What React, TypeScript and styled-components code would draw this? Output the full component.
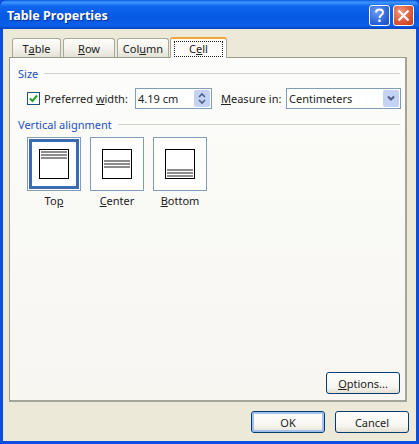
import React from "react"
import styled, { createGlobalStyle } from "styled-components"

const Global = createGlobalStyle`
  html, body { margin: 0; padding: 0; background: #0a4fd8; }
  * { box-sizing: border-box; }
`

const Window = styled.div`
  width: 419px;
  height: 444px;
  display: flex;
  flex-direction: column;
  font-family: "Noto Sans", "DejaVu Sans", sans-serif;
  font-size: 11px;
  color: #222;
  background: #0a4ee0;
  border-radius: 7px 7px 0 0;
  overflow: hidden;
`

const TitleBar = styled.div`
  height: 29px;
  flex: none;
  display: flex;
  align-items: center;
  justify-content: space-between;
  padding: 1px 5px 0 7px;
  background: linear-gradient(180deg, #0a5be6 0%, #3f95fb 8%, #0f66ee 22%, #0558e2 60%, #0a60ec 88%, #0443c0 100%);
`

const Title = styled.span`
  font-family: "Noto Sans", "DejaVu Sans", sans-serif;
  font-weight: 700;
  font-size: 12.5px;
  color: #fff;
  text-shadow: 1px 1px 1px #0a2f96;
`

const TitleButtons = styled.div`
  display: flex;
  gap: 3px;
`

const CaptionButton = styled.div<{ $close?: boolean }>`
  width: 21px;
  height: 21px;
  border: 1px solid #fff;
  border-radius: 3px;
  display: flex;
  align-items: center;
  justify-content: center;
  background: ${(p) =>
    p.$close
      ? "radial-gradient(circle at 35% 30%, #ee9a80 0%, #dd5a3a 55%, #c33a16 100%)"
      : "radial-gradient(circle at 35% 30%, #6d9cf4 0%, #2e66dd 60%, #1c48bf 100%)"};
`

const Client = styled.div`
  flex: 1;
  margin: 0 3px 3px;
  padding: 7px 6px 0 6px;
  display: flex;
  flex-direction: column;
  background: #ece9d8;
`

const TabRow = styled.div`
  display: flex;
  align-items: flex-end;
  gap: 2px;
  padding-left: 3px;
  height: 21px;
  flex: none;
`

const Tab = styled.div<{ $active?: boolean; $w: number }>`
  width: ${(p) => p.$w}px;
  height: ${(p) => (p.$active ? 21 : 19)}px;
  display: flex;
  align-items: center;
  justify-content: center;
  border: 1px solid #a9a89c;
  border-bottom: none;
  border-radius: 3px 3px 0 0;
  position: relative;
  z-index: ${(p) => (p.$active ? 1 : 0)};
  margin-bottom: ${(p) => (p.$active ? -1 : 0)}px;
  margin-left: ${(p) => (p.$active ? -1 : 0)}px;
  background: ${(p) =>
    p.$active ? "#fcfcfa" : "linear-gradient(180deg, #fefefb 0%, #f4f3ec 50%, #e4e2d6 100%)"};
  border-top: ${(p) => (p.$active ? "2px solid #f2a53a" : "1px solid #a9a89c")};
`

const FocusLabel = styled.span`
  border: 1px dotted #222;
  padding: 0 14px;
  line-height: 14px;
`

const Key = styled.span`
  text-decoration: underline;
`

const Panel = styled.div`
  width: 398px;
  height: 345px;
  flex: none;
  padding: 7px 5px 6px 8px;
  display: flex;
  flex-direction: column;
  border: 1px solid #9a9a8e;
  border-right: 2px solid #a5a498;
  border-bottom: 2px solid #a5a498;
  background: linear-gradient(180deg, #fcfcfa 0%, #f7f6f1 100%);
`

const Legend = styled.div`
  display: flex;
  align-items: center;
  gap: 6px;
  height: 16px;
  color: #2250c0;
  &::after {
    content: "";
    flex: 1;
    height: 1px;
    background: #d4d2c8;
  }
`

const SizeRow = styled.div`
  display: flex;
  align-items: center;
  height: 21px;
  margin: 7px 0 0 9px;
`

const Check = styled.div`
  width: 13px;
  height: 13px;
  flex: none;
  border: 1px solid #1c5180;
  background: #fff;
  display: flex;
  align-items: center;
  justify-content: center;
  margin-right: 4px;
`

const RowLabel = styled.span<{ $w: number; $inset?: number }>`
  width: ${(p) => p.$w}px;
  padding-left: ${(p) => p.$inset ?? 0}px;
  flex: none;
  white-space: nowrap;
`

const Field = styled.div<{ $w: number }>`
  width: ${(p) => p.$w}px;
  height: 21px;
  flex: none;
  display: flex;
  align-items: center;
  justify-content: space-between;
  padding: 1px 1px 1px 2px;
  border: 1px solid #7f9db9;
  background: #fff;
`

const Spin = styled.div`
  width: 16px;
  height: 17px;
  display: flex;
  align-items: center;
  justify-content: center;
  border-radius: 2px;
  background: #c3d2f5;
`

const AlignSection = styled.div`
  margin-top: 7px;
`

const AlignRow = styled.div`
  display: flex;
  gap: 9px;
  margin: 5px 0 0 9px;
`

const AlignItem = styled.div`
  width: 54px;
  display: flex;
  flex-direction: column;
  align-items: center;
  gap: 3px;
`

const AlignButton = styled.div<{ $selected?: boolean }>`
  width: 54px;
  height: 54px;
  display: flex;
  align-items: center;
  justify-content: center;
  border: 1px solid #7f9db9;
  background: #fff;
  outline: ${(p) => (p.$selected ? "3px solid #3a6bb5" : "none")};
  outline-offset: -5px;
`

const AlignLabel = styled.span`
  line-height: 14px;
`

const OptionsRow = styled.div`
  margin-top: auto;
  display: flex;
  justify-content: flex-end;
`

const Button = styled.div<{ $default?: boolean }>`
  width: 74px;
  height: 22px;
  display: flex;
  align-items: center;
  justify-content: center;
  border: 1px solid #003c74;
  border-radius: 3px;
  background: linear-gradient(180deg, #ffffff 0%, #f6f5ef 70%, #e3e0d4 100%);
  box-shadow: ${(p) => (p.$default ? "inset 0 0 0 2px #a4c0ec" : "none")};
`

const Footer = styled.div`
  display: flex;
  justify-content: flex-end;
  gap: 10px;
  margin-top: 9px;
  margin-right: 1px;
`

const AlignIcon = ({ pos }: { pos: "top" | "center" | "bottom" }) => {
  const y = pos === "top" ? 2 : pos === "center" ? 11 : 20
  return (
    <svg width="30" height="30" viewBox="0 0 30 30">
      <rect x="0.5" y="0.5" width="29" height="29" fill="#fff" stroke="#000" />
      {[0, 3, 6].map((d) => (
        <rect key={d} x="2" y={y + d} width="26" height="2" fill="#8c8c8c" />
      ))}
    </svg>
  )
}

export default function App() {
  return (
    <>
      <Global />
      <Window>
        <TitleBar>
          <Title>Table Properties</Title>
          <TitleButtons>
            <CaptionButton>
              <svg width="13" height="15" viewBox="0 0 13 15">
                <path d="M3 4.5C3 2.5 4.6 1.5 6.5 1.5S10 2.6 10 4.4C10 7 6.5 7 6.5 10" fill="none" stroke="#fff" strokeWidth="2" />
                <rect x="5.3" y="11.5" width="2.4" height="2.4" fill="#fff" />
              </svg>
            </CaptionButton>
            <CaptionButton $close>
              <svg width="13" height="13" viewBox="0 0 13 13">
                <path d="M1.5 1.5L11.5 11.5M11.5 1.5L1.5 11.5" stroke="#fff" strokeWidth="2.2" />
              </svg>
            </CaptionButton>
          </TitleButtons>
        </TitleBar>
        <Client>
          <TabRow>
            <Tab $w={49}>T<Key>a</Key>ble</Tab>
            <Tab $w={52}><Key>R</Key>ow</Tab>
            <Tab $w={52}>Col<Key>u</Key>mn</Tab>
            <Tab $w={57} $active><FocusLabel>C<Key>e</Key>ll</FocusLabel></Tab>
          </TabRow>
          <Panel>
            <Legend>Size</Legend>
            <SizeRow>
              <Check>
                <svg width="9" height="9" viewBox="0 0 9 9">
                  <path d="M1 4.5L3.5 7L8 1.5" fill="none" stroke="#21a121" strokeWidth="2" />
                </svg>
              </Check>
              <RowLabel $w={91}>Preferred <Key>w</Key>idth:</RowLabel>
              <Field $w={77}>
                4.19 cm
                <Spin>
                  <svg width="10" height="15" viewBox="0 0 10 15">
                    <path d="M2 6L5 3L8 6M2 9L5 12L8 9" fill="none" stroke="#4d6185" strokeWidth="1.6" />
                  </svg>
                </Spin>
              </Field>
              <RowLabel $w={74} $inset={9}><Key>M</Key>easure in:</RowLabel>
              <Field $w={115}>
                Centimeters
                <Spin>
                  <svg width="10" height="9" viewBox="0 0 10 9">
                    <path d="M2 2.5L5 5.5L8 2.5" fill="none" stroke="#4d6185" strokeWidth="2" />
                  </svg>
                </Spin>
              </Field>
            </SizeRow>
            <AlignSection>
              <Legend>Vertical alignment</Legend>
              <AlignRow>
                <AlignItem>
                  <AlignButton $selected><AlignIcon pos="top" /></AlignButton>
                  <AlignLabel>To<Key>p</Key></AlignLabel>
                </AlignItem>
                <AlignItem>
                  <AlignButton><AlignIcon pos="center" /></AlignButton>
                  <AlignLabel><Key>C</Key>enter</AlignLabel>
                </AlignItem>
                <AlignItem>
                  <AlignButton><AlignIcon pos="bottom" /></AlignButton>
                  <AlignLabel><Key>B</Key>ottom</AlignLabel>
                </AlignItem>
              </AlignRow>
            </AlignSection>
            <OptionsRow>
              <Button><span><Key>O</Key>ptions...</span></Button>
            </OptionsRow>
          </Panel>
          <Footer>
            <Button $default>OK</Button>
            <Button>Cancel</Button>
          </Footer>
        </Client>
      </Window>
    </>
  )
}
